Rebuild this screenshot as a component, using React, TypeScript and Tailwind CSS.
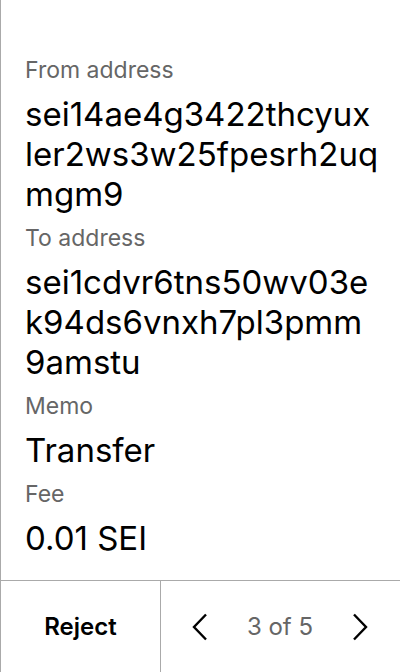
import React from "react";

const fields = [
    { label: "From address", value: "sei14ae4g3422thcyuxler2ws3w25fpesrh2uqmgm9" },
    { label: "To address", value: "sei1cdvr6tns50wv03ek94ds6vnxh7pl3pmm9amstu" },
    { label: "Memo", value: "Transfer" },
    { label: "Fee", value: "0.01 SEI" },
];

function Chevron({ dir }: { dir: "left" | "right" }) {
    return (
        <svg width="16" height="28" viewBox="0 0 16 28" fill="none" stroke="#000" strokeWidth={2.4}>
            {dir === "left" ? (
                <polyline points="14,1.5 2,14 14,26.5" />
            ) : (
                <polyline points="2,1.5 14,14 2,26.5" />
            )}
        </svg>
    );
}

export default function App() {
    return (
        <div
            className="flex flex-col h-[672px] w-[400px] bg-white border-l border-[#aaaaaa]"
            style={{ fontFamily: "Inter, 'Noto Sans', sans-serif" }}
        >
            <div className="flex-1 pt-[56px] pl-[24px]">
                {fields.map((f) => (
                    <div key={f.label} className="pb-[10px]">
                        <div className="text-[23px] leading-[28px] text-[#666666] mb-[10px]">{f.label}</div>
                        {/* width tuned so the addresses break where the screenshot does */}
                        <div className="w-[353.22px] text-[33px] leading-[40px] text-black break-all">{f.value}</div>
                    </div>
                ))}
            </div>
            <div className="flex h-[92px] border-t border-[#aaaaaa]">
                <button className="w-[160px] flex items-center justify-center border-r border-[#aaaaaa] text-[24px] font-semibold text-black">
                    Reject
                </button>
                <div className="flex-1 flex items-center justify-between pl-[31px] pr-[32px]">
                    <Chevron dir="left" />
                    <span className="text-[24px] text-[#666666]">3 of 5</span>
                    <Chevron dir="right" />
                </div>
            </div>
        </div>
    );
}
